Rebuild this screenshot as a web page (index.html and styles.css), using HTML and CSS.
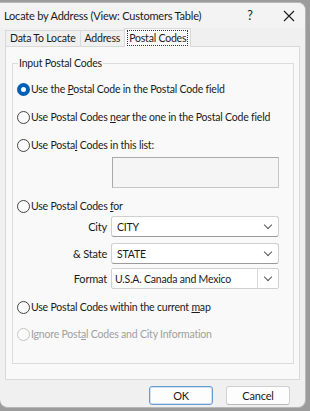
FILE: index.html
```html
<!DOCTYPE html>
<html lang="en">
  <head>
    <meta charset="UTF-8" />
    <title>Locate by Address</title>
    <link rel="stylesheet" href="styles.css">
  </head>
  <body>
    <div class="dialog">
      <div class="titlebar">
        <span class="title">Locate by Address (View: Customers Table)</span>
        <span class="help">?</span>
        <span class="close">
          <svg width="12" height="12" viewBox="0 0 12 12"><path d="M1 1L11 11M11 1L1 11" stroke="#1a1a1a" stroke-width="1.1" fill="none"/></svg>
        </span>
      </div>

      <div class="tabs">
        <div class="tab">Data To Locate</div>
        <div class="tab">Address</div>
        <div class="tab active"><span class="focus">Postal Codes</span></div>
      </div>

      <div class="panel">
        <fieldset class="group">
          <legend>Input Postal Codes</legend>

          <label class="opt opt-1"><span class="radio checked"></span><span>Use the <u>P</u>ostal Code in the Postal Code field</span></label>
          <label class="opt opt-2"><span class="radio"></span><span>Use Postal Codes <u>n</u>ear the one in the Postal Code field</span></label>
          <label class="opt opt-3"><span class="radio"></span><span>Use Posta<u>l</u> Codes in this list:</span></label>
          <div class="listbox"></div>
          <label class="opt opt-4"><span class="radio"></span><span>Use Postal Codes <u>f</u>or</span></label>

          <div class="field field-city">
            <span class="field-label">City</span>
            <div class="select"><span>CITY</span><i class="chev"></i></div>
          </div>
          <div class="field field-state">
            <span class="field-label">&amp; State</span>
            <div class="select"><span>STATE</span><i class="chev"></i></div>
          </div>
          <div class="field field-format">
            <span class="field-label">Format</span>
            <div class="select combo"><span>U.S.A. Canada and Mexico</span><i class="sep"></i><i class="chev"></i></div>
          </div>

          <label class="opt opt-5"><span class="radio"></span><span>Use Postal Codes within the current <u>m</u>ap</span></label>
          <label class="opt opt-6 disabled"><span class="radio"></span><span>Ignore Post<u>a</u>l Codes and City Information</span></label>
        </fieldset>
      </div>

      <div class="buttons">
        <button class="btn default">OK</button>
        <button class="btn">Cancel</button>
      </div>
    </div>
  </body>
</html>
```

FILE: styles.css
```css
* {
  box-sizing: border-box;
}

body {
  margin: 0;
  padding-top: 2px;
  background: #9c9c9c;
  font-family: Lato, "Noto Sans", sans-serif;
  font-size: 10.5px;
  letter-spacing: -0.2px;
  color: #1a1a1a;
}

.dialog {
  width: 306px;
  height: 406px;
  background: #f0f0f0;
  border: 1px solid #b8b8b8;
  border-left: none;
  border-radius: 0 8px 8px 8px;
  overflow: hidden;
}

/* title bar */
.titlebar {
  height: 25px;
  display: flex;
  align-items: center;
  padding-left: 4px;
  background: #f3f3f3;
  white-space: nowrap;
}

.titlebar .title {
  font-size: 11px;
  flex: 1;
}

.titlebar .help {
  font-size: 12.5px;
  width: 46px;
  text-align: center;
}

.titlebar .close {
  width: 32px;
  display: flex;
  justify-content: center;
}

/* tabs */
.tabs {
  display: flex;
  align-items: flex-end;
  height: 18px;
  padding-left: 5px;
  white-space: nowrap;
}

.tab {
  height: 16px;
  padding: 0 4px;
  border: 1px solid #d9d9d9;
  border-bottom: none;
  margin-right: -1px;
  background: #f0f0f0;
  line-height: 15px;
}

.tab.active {
  height: 19px;
  background: #f9f9f9;
  position: relative;
  margin-bottom: -1px;
  padding: 1px 2px 0 2px;
}

.tab .focus {
  display: inline-block;
  border: 1px dotted #333;
  padding: 0 1px;
  line-height: 14px;
}

/* tab page */
.panel {
  margin: 0 5px;
  height: 334px;
  background: #f9f9f9;
  border: 1px solid #d9d9d9;
  padding: 9px 5px 0 6px;
}

.group {
  margin: 0;
  height: 308px;
  border: 1px solid #dcdcdc;
  padding: 0 0 0 4px;
  display: flex;
  flex-direction: column;
}

.group legend {
  padding: 0 1px;
  margin-left: 1px;
  line-height: 14px;
}

.opt {
  display: flex;
  align-items: center;
  gap: 1px;
  height: 16px;
  white-space: nowrap;
}

.opt-1 { margin-top: 11px; }
.opt-2 { margin-top: 12px; }
.opt-3 { margin-top: 12px; }
.opt-4 { margin-top: 10px; }
.opt-5 { margin-top: 10px; }
.opt-6 { margin-top: 11px; }

.opt.disabled {
  color: #a0a0a0;
}

.radio {
  width: 13px;
  height: 13px;
  border: 1px solid #444;
  border-radius: 50%;
  background: #fbfbfb;
  flex: none;
}

.radio.checked {
  border: 4px solid #005fb8;
  background: #fff;
}

.disabled .radio {
  border-color: #c4c4c4;
}

.listbox {
  margin: 4px 0 0 95px;
  width: 167px;
  height: 31px;
  border: 1px solid #c6c6c6;
  border-top-color: #a9a9a9;
  border-left-color: #a9a9a9;
  background: #f5f5f5;
}

/* city / state / format rows */
.field {
  display: flex;
  align-items: center;
  height: 21px;
  white-space: nowrap;
}

.field-city { margin-top: 2px; }
.field-state { margin-top: 6px; }
.field-format { margin-top: 4px; }

.field-label {
  width: 94px;
  text-align: right;
  padding-right: 4px;
  font-size: 11px;
}

.select {
  width: 168px;
  height: 21px;
  display: flex;
  align-items: center;
  background: #fff;
  border: 1px solid #d0d0d0;
  border-bottom-color: #9a9a9a;
  border-radius: 3px;
  padding-left: 5px;
}

.select span {
  flex: 1;
}

.select.combo {
  border-radius: 2px;
  border-bottom-color: #d0d0d0;
  padding-left: 3px;
}

.select .sep {
  width: 1px;
  height: 19px;
  background: #d8d8d8;
}

.chev {
  width: 20px;
  height: 19px;
  position: relative;
}

.chev::after {
  content: "";
  position: absolute;
  left: 7px;
  top: 5px;
  width: 5px;
  height: 5px;
  border-right: 1px solid #555;
  border-bottom: 1px solid #555;
  transform: rotate(45deg);
}

/* bottom buttons */
.buttons {
  display: flex;
  justify-content: flex-end;
  gap: 13px;
  padding: 6px 15px 0 0;
}

.btn {
  width: 64px;
  height: 19px;
  font-family: inherit;
  font-size: 11px;
  letter-spacing: -0.2px;
  color: #1a1a1a;
  background: #fdfdfd;
  border: 1px solid #d0d0d0;
  border-bottom-color: #b8b8b8;
  border-radius: 3px;
  padding: 0;
  line-height: 15px;
}

.btn.default {
  border: 1px solid #6a9bd0;
  box-shadow: inset 0 0 0 1px #cfe0f3;
}
```
